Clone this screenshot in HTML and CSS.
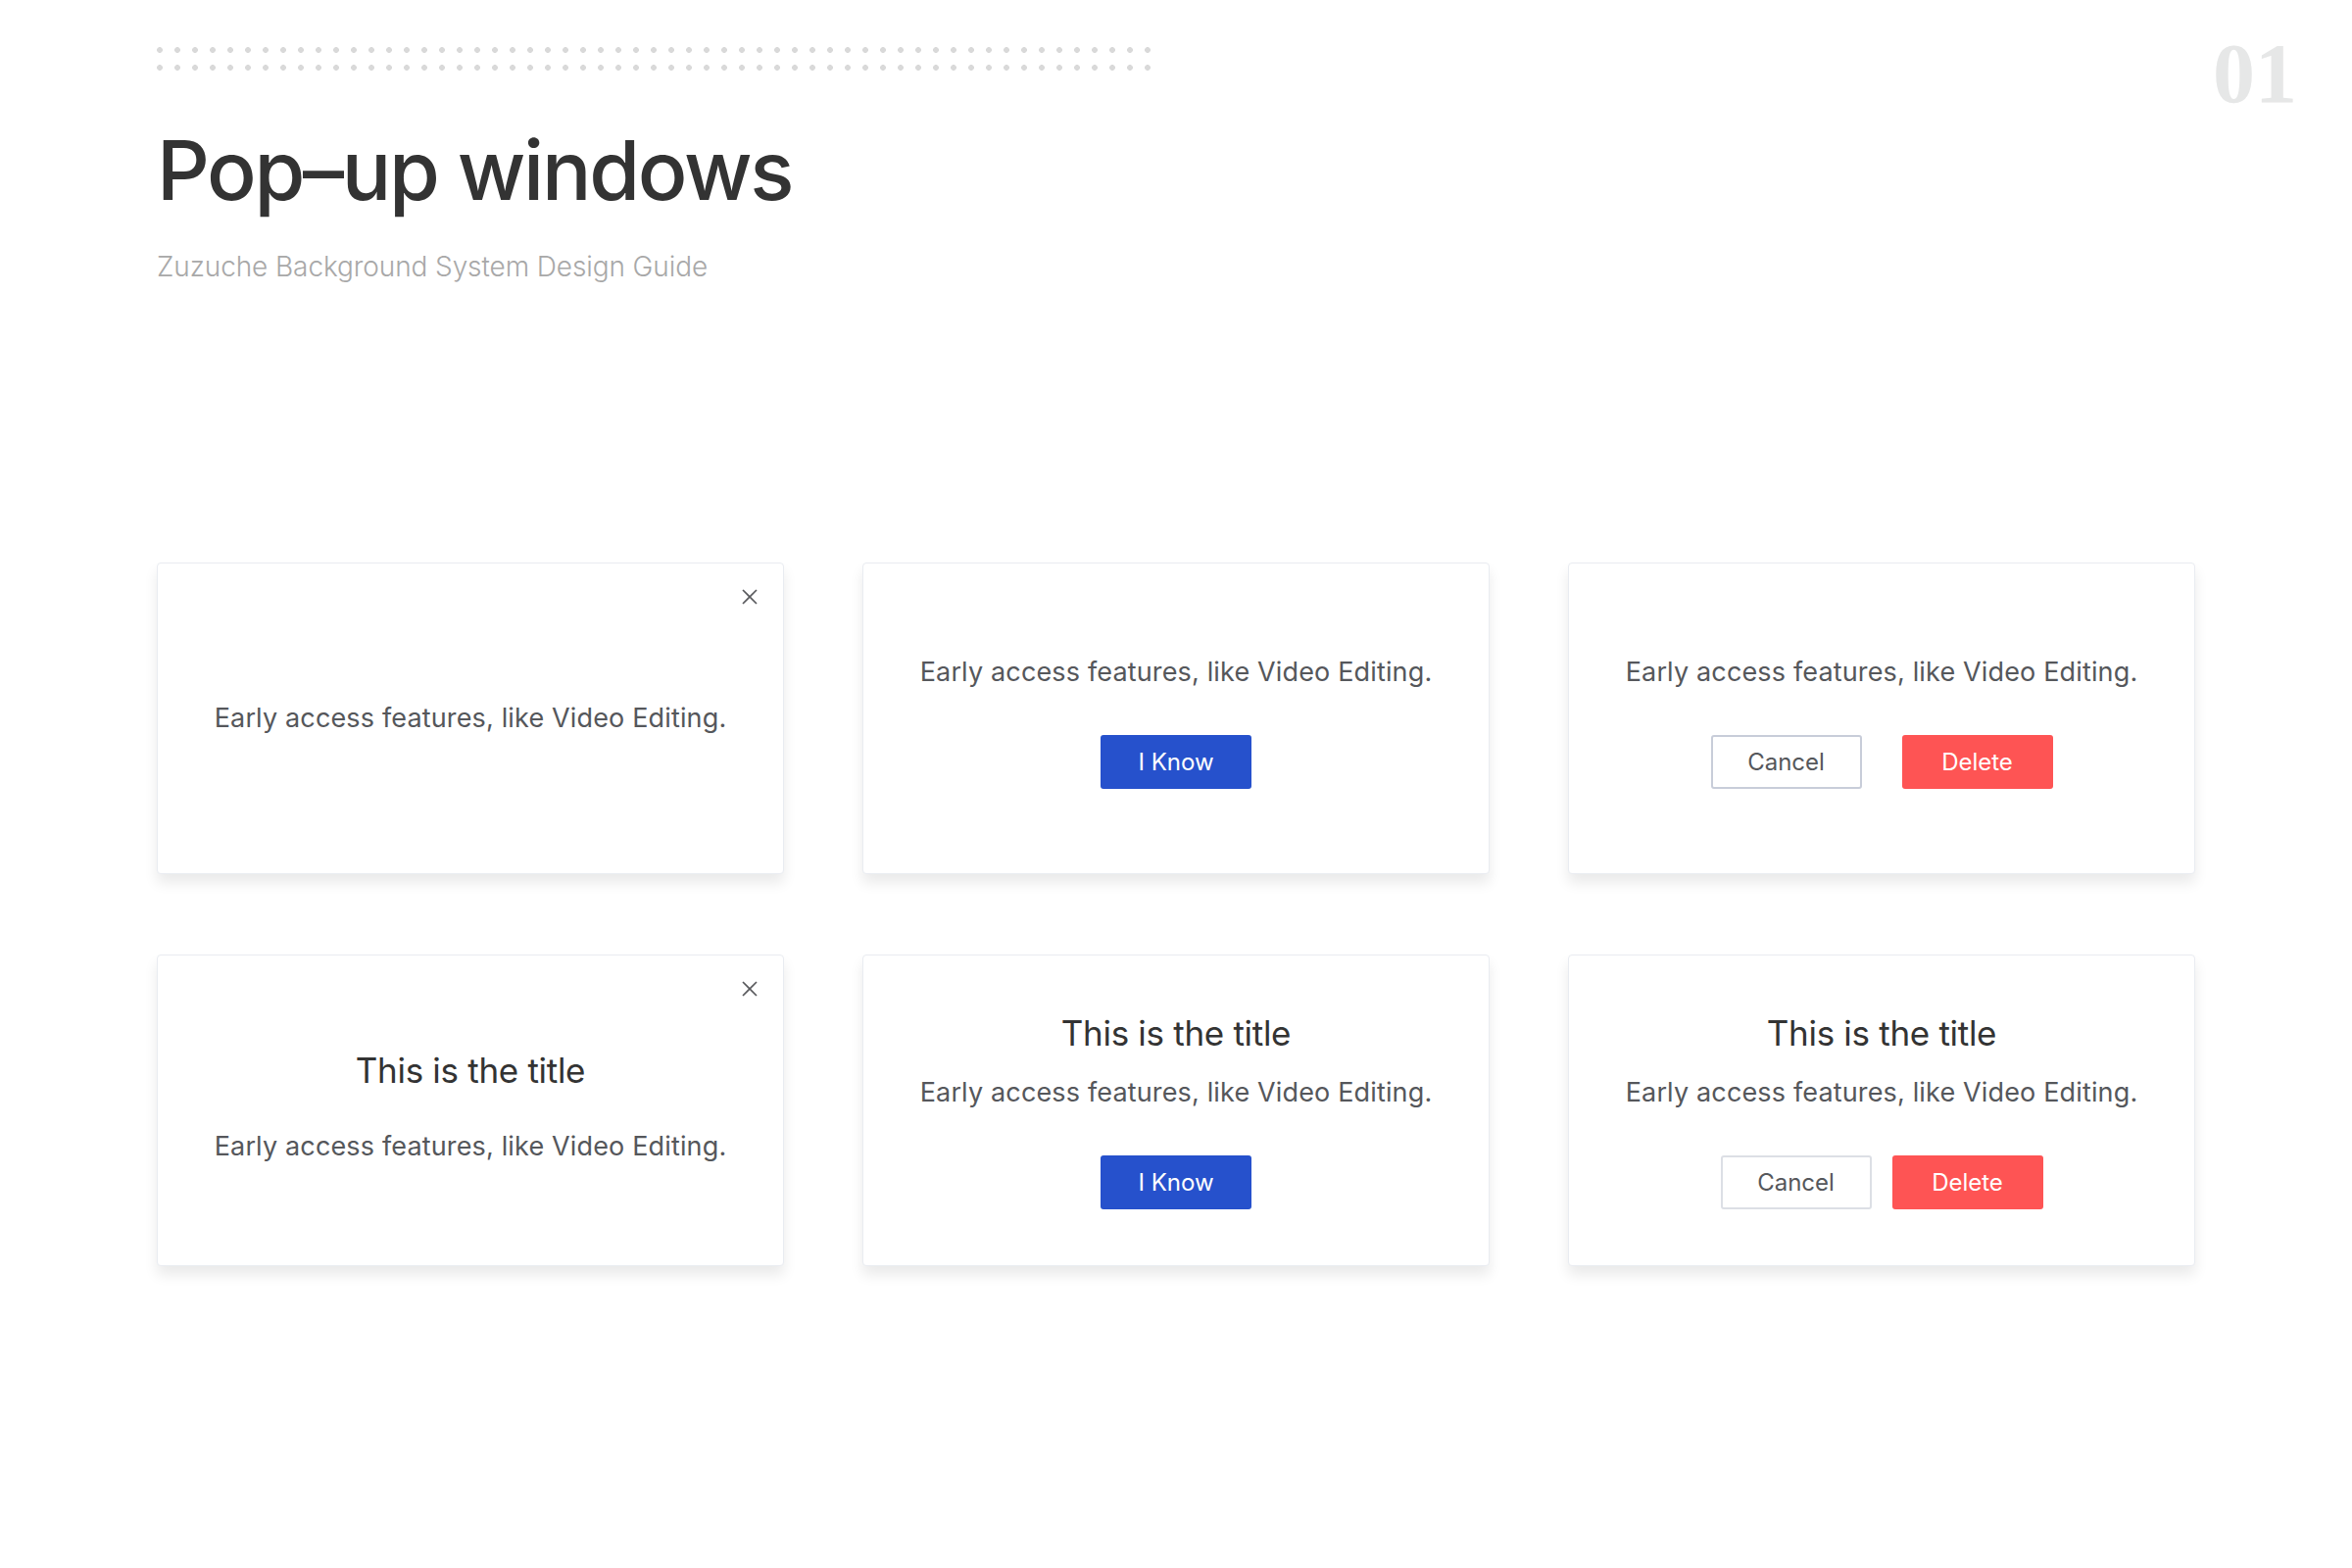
FILE: index.html
```html
<!DOCTYPE html>
<html lang="en">
<head>
<meta charset="utf-8">
<title>Pop-up windows</title>
<link rel="stylesheet" href="styles.css">
</head>
<body>
<div class="page">
  <header class="header">
    <div class="header-main">
      <div class="dots"></div>
      <h1 class="heading">Pop–up windows</h1>
      <p class="subheading">Zuzuche Background System Design Guide</p>
    </div>
    <div class="page-num">01</div>
  </header>

  <main class="grid">
    <div class="card">
      <span class="close"><svg viewBox="0 0 16 16" width="16" height="16"><path d="M1 1L15 15M15 1L1 15" stroke="#58595c" stroke-width="1.7" fill="none"/></svg></span>
      <p class="text">Early access features, like Video Editing.</p>
    </div>

    <div class="card card--action">
      <p class="text">Early access features, like Video Editing.</p>
      <div class="actions">
        <button class="btn btn--primary">I Know</button>
      </div>
    </div>

    <div class="card card--action">
      <p class="text">Early access features, like Video Editing.</p>
      <div class="actions actions--wide">
        <button class="btn btn--default">Cancel</button>
        <button class="btn btn--danger">Delete</button>
      </div>
    </div>

    <div class="card card--titled">
      <span class="close"><svg viewBox="0 0 16 16" width="16" height="16"><path d="M1 1L15 15M15 1L1 15" stroke="#58595c" stroke-width="1.7" fill="none"/></svg></span>
      <h2 class="title">This is the title</h2>
      <p class="text text--far">Early access features, like Video Editing.</p>
    </div>

    <div class="card">
      <h2 class="title">This is the title</h2>
      <p class="text text--near">Early access features, like Video Editing.</p>
      <div class="actions">
        <button class="btn btn--primary">I Know</button>
      </div>
    </div>

    <div class="card">
      <h2 class="title">This is the title</h2>
      <p class="text text--near">Early access features, like Video Editing.</p>
      <div class="actions actions--tight">
        <button class="btn btn--default btn--light">Cancel</button>
        <button class="btn btn--danger">Delete</button>
      </div>
    </div>
  </main>
</div>
</body>
</html>
```

FILE: styles.css
```css
* {
  box-sizing: border-box;
}

html, body {
  margin: 0;
  padding: 0;
  background: #ffffff;
}

body {
  font-family: "Inter", "Noto Sans", sans-serif;
  width: 2400px;
  height: 1600px;
  overflow: hidden;
}

.page {
  width: 2400px;
}

.header {
  display: flex;
  justify-content: space-between;
  align-items: flex-start;
  padding: 0 56px 0 160px;
}

.header-main {
  display: flex;
  flex-direction: column;
}

.dots {
  margin-top: 42px;
  width: 1020px;
  height: 36px;
  background-image: radial-gradient(circle, #d9d9d9 2.6px, rgba(217, 217, 217, 0) 3.2px);
  background-size: 18px 18px;
  background-position: -6px 0;
}

.heading {
  margin: 54px 0 0;
  font-size: 84px;
  line-height: 1;
  font-weight: 500;
  color: #333333;
  letter-spacing: -2.3px;
}

.subheading {
  margin: 42px 0 0;
  font-size: 28px;
  line-height: 1;
  font-weight: 300;
  color: #a8a8a8;
  letter-spacing: -0.1px;
}

.page-num {
  margin-top: 32px;
  font-family: "Liberation Serif", "DejaVu Serif", serif;
  font-weight: 700;
  font-size: 86px;
  line-height: 1;
  color: #e6e7e7;
}

.grid {
  display: grid;
  grid-template-columns: repeat(3, 640px);
  grid-template-rows: 318px 318px;
  column-gap: 80px;
  row-gap: 82px;
  margin-top: 288px;
  padding-left: 160px;
}

.card {
  position: relative;
  display: flex;
  flex-direction: column;
  align-items: center;
  justify-content: center;
  background: #ffffff;
  border: 1px solid #e9ecf1;
  border-radius: 4px;
  box-shadow: 0 9px 14px rgba(0, 0, 0, 0.085);
}

.card--action {
  padding-top: 6px;
}

.card--titled {
  padding-bottom: 8px;
}

.close {
  position: absolute;
  top: 26px;
  right: 26px;
  width: 16px;
  height: 16px;
  display: block;
}

.close svg {
  display: block;
}

.title {
  margin: 0;
  font-size: 35px;
  line-height: 44px;
  font-weight: 400;
  color: #333333;
  letter-spacing: -0.3px;
}

.text {
  margin: 0;
  font-size: 27px;
  line-height: 36px;
  font-weight: 400;
  color: #55575b;
  letter-spacing: 0.15px;
}

.text--near {
  margin-top: 21px;
}

.text--far {
  margin-top: 38px;
}

.actions {
  display: flex;
  gap: 41px;
  margin-top: 46px;
}

.actions--tight {
  gap: 21px;
}

.btn {
  width: 154px;
  height: 55px;
  border-radius: 3px;
  font-family: "Inter", "Noto Sans", sans-serif;
  font-size: 24px;
  font-weight: 400;
  border: none;
  padding: 0;
  cursor: pointer;
}

.btn--primary {
  background: #2651cc;
  color: #ffffff;
}

.btn--danger {
  background: #fe5454;
  color: #ffffff;
}

.btn--default {
  background: #ffffff;
  color: #55575b;
  border: 2px solid #c8cdd9;
}

.btn--light {
  border-color: #dcdfe5;
}
```
